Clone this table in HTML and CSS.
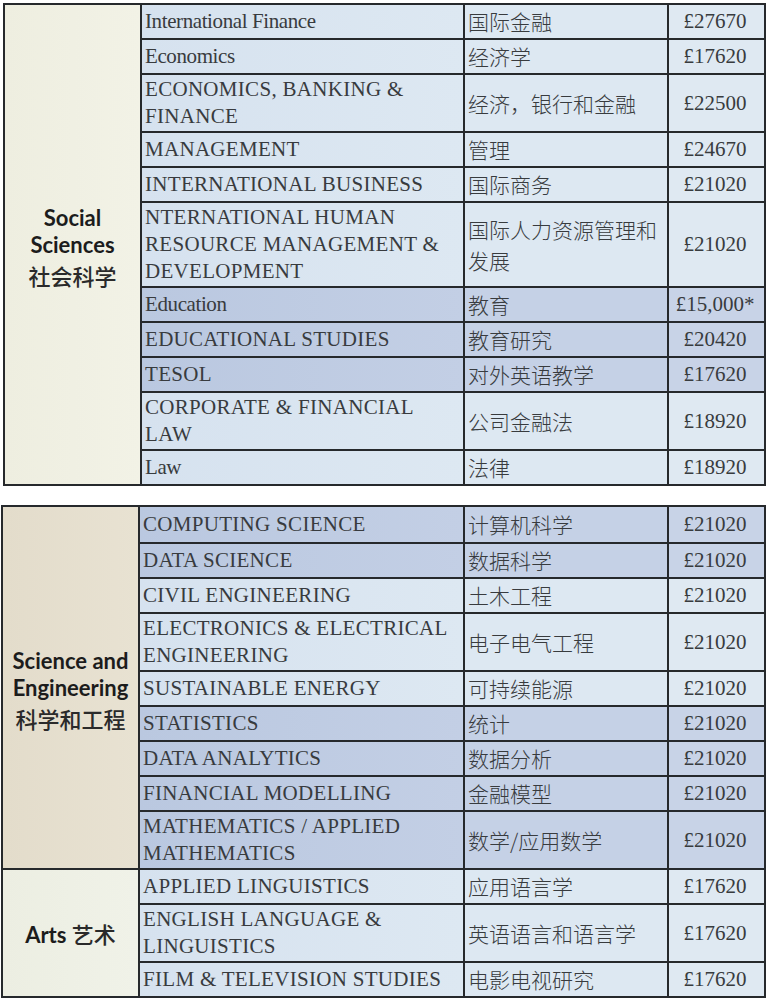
FILE: index.html
```html
<!DOCTYPE html>
<html lang="zh">
<head>
<meta charset="utf-8">
<title>Tuition fees</title>
<link rel="stylesheet" href="styles.css">
</head>
<body>
<table class="fees fees-a">
  <colgroup><col class="c1"><col class="c2"><col class="c3"><col class="c4"></colgroup>
  <tr class="lt">
    <th rowspan="11" class="cat cat-soc"><span class="ln">Social</span><span class="ln">Sciences</span><span class="ln zh">社会科学</span></th>
    <td class="en mixed">International Finance</td><td class="zh">国际金融</td><td class="fee">£27670</td>
  </tr>
  <tr class="lt"><td class="en mixed">Economics</td><td class="zh">经济学</td><td class="fee">£17620</td></tr>
  <tr class="lt"><td class="en">ECONOMICS, BANKING &amp;<br>FINANCE</td><td class="zh">经济，银行和金融</td><td class="fee">£22500</td></tr>
  <tr class="lt"><td class="en">MANAGEMENT</td><td class="zh">管理</td><td class="fee">£24670</td></tr>
  <tr class="lt"><td class="en">INTERNATIONAL BUSINESS</td><td class="zh">国际商务</td><td class="fee">£21020</td></tr>
  <tr class="lt"><td class="en">NTERNATIONAL HUMAN<br>RESOURCE MANAGEMENT &amp;<br>DEVELOPMENT</td><td class="zh"><span class="ln zl1">国际人力资源管理和</span><span class="ln zl2">发展</span></td><td class="fee">£21020</td></tr>
  <tr class="dk"><td class="en mixed">Education</td><td class="zh">教育</td><td class="fee">£15,000*</td></tr>
  <tr class="dk"><td class="en">EDUCATIONAL STUDIES</td><td class="zh">教育研究</td><td class="fee">£20420</td></tr>
  <tr class="dk"><td class="en">TESOL</td><td class="zh">对外英语教学</td><td class="fee">£17620</td></tr>
  <tr class="lt"><td class="en">CORPORATE &amp; FINANCIAL<br>LAW</td><td class="zh">公司金融法</td><td class="fee">£18920</td></tr>
  <tr class="lt"><td class="en mixed">Law</td><td class="zh">法律</td><td class="fee">£18920</td></tr>
</table>

<table class="fees fees-b">
  <colgroup><col class="c1"><col class="c2"><col class="c3"><col class="c4"></colgroup>
  <tr class="dk first">
    <th rowspan="9" class="cat cat-sci"><span class="ln">Science and</span><span class="ln">Engineering</span><span class="ln zh">科学和工程</span></th>
    <td class="en">COMPUTING SCIENCE</td><td class="zh">计算机科学</td><td class="fee">£21020</td>
  </tr>
  <tr class="dk"><td class="en">DATA SCIENCE</td><td class="zh">数据科学</td><td class="fee">£21020</td></tr>
  <tr class="lt"><td class="en">CIVIL ENGINEERING</td><td class="zh">土木工程</td><td class="fee">£21020</td></tr>
  <tr class="lt"><td class="en">ELECTRONICS &amp; ELECTRICAL<br>ENGINEERING</td><td class="zh">电子电气工程</td><td class="fee">£21020</td></tr>
  <tr class="lt"><td class="en">SUSTAINABLE ENERGY</td><td class="zh">可持续能源</td><td class="fee">£21020</td></tr>
  <tr class="dk"><td class="en">STATISTICS</td><td class="zh">统计</td><td class="fee">£21020</td></tr>
  <tr class="dk"><td class="en">DATA ANALYTICS</td><td class="zh">数据分析</td><td class="fee">£21020</td></tr>
  <tr class="dk"><td class="en">FINANCIAL MODELLING</td><td class="zh">金融模型</td><td class="fee">£21020</td></tr>
  <tr class="dk"><td class="en">MATHEMATICS / APPLIED<br>MATHEMATICS</td><td class="zh">数学/应用数学</td><td class="fee">£21020</td></tr>
  <tr class="lt">
    <th rowspan="3" class="cat cat-arts"><span class="ln">Arts <span class="zh">艺术</span></span></th>
    <td class="en">APPLIED LINGUISTICS</td><td class="zh">应用语言学</td><td class="fee">£17620</td>
  </tr>
  <tr class="lt"><td class="en">ENGLISH LANGUAGE &amp;<br>LINGUISTICS</td><td class="zh">英语语言和语言学</td><td class="fee">£17620</td></tr>
  <tr class="lt"><td class="en">FILM &amp; TELEVISION STUDIES</td><td class="zh">电影电视研究</td><td class="fee">£17620</td></tr>
</table>
</body>
</html>
```

FILE: styles.css
```css
html, body {
  margin: 0;
  padding: 0;
  background: #ffffff;
}

body {
  padding: 3px 4px 0 3px;
}

.fees {
  border-collapse: collapse;
  table-layout: fixed;
  width: 761px;
  font-family: "Liberation Serif", "Times New Roman", "Noto Sans CJK SC", serif;
  font-size: 21px;
  line-height: 27px;
  color: #383b3e;
}

.fees-a {
  margin: 0;
}

.fees-b {
  margin: 19px 0 0 -2px;
  width: 763px;
}

.c1 { width: 137px; }
.c2 { width: 323px; }
.c3 { width: 204px; }
.c4 { width: 97px; }

.fees-b .c2 { width: 325px; }

.fees th,
.fees td {
  border: 2px solid #26292c;
  padding: 1px 3px 1px 3px;
  vertical-align: middle;
  text-align: left;
  font-weight: normal;
}

.fees tr {
  height: 35px;
}

.fees tr.first {
  height: 37px;
}

.fees .ln {
  display: block;
  height: 27px;
  line-height: 27px;
  white-space: nowrap;
}

.fees .zl1 {
  margin-top: -2px;
}

.fees .zl2 {
  margin-top: 4px;
  margin-bottom: -2px;
}

.fees td.en {
  letter-spacing: 0.3px;
}

.fees td.mixed {
  letter-spacing: -0.4px;
}

.fees td.zh,
.fees .zh {
  font-family: "Noto Sans CJK SC", sans-serif;
  font-weight: 300;
}

.fees td.zh {
  font-size: 21px;
  color: #383b3e;
}

.fees td.fee {
  text-align: center;
  padding-right: 6px;
}

.lt td.en { background: linear-gradient(90deg, #d6e2ef, #dde8f2); }
.lt td.zh { background: #dde8f2; }
.lt td.fee { background: #dfe9f2; }

.dk td.en { background: linear-gradient(90deg, #bac8e0, #c3cfe5); }
.dk td.zh { background: #c5d1e6; }
.dk td.fee { background: #c8d3e7; }

.cat {
  text-align: center !important;
  padding: 0 !important;
  font-family: "Lato", "Noto Sans CJK SC", sans-serif;
  font-size: 22px;
  line-height: 27px;
  font-weight: 700 !important;
  color: #1c1c1c;
}

.fees .cat .zh {
  font-weight: 500;
  font-size: 22px;
  color: #2a2a2a;
}

.fees .cat .ln.zh {
  margin-top: 4px;
  margin-bottom: -4px;
}

.fees .cat-arts .zh {
  display: inline;
}

.cat-soc {
  background: linear-gradient(90deg, #eeeee0, #f2f2e6);
}

.cat-sci {
  background: linear-gradient(90deg, #e3dccb, #e8e2d2);
}

.cat-arts {
  background: linear-gradient(90deg, #eceee2, #f0f2e8);
}
```
